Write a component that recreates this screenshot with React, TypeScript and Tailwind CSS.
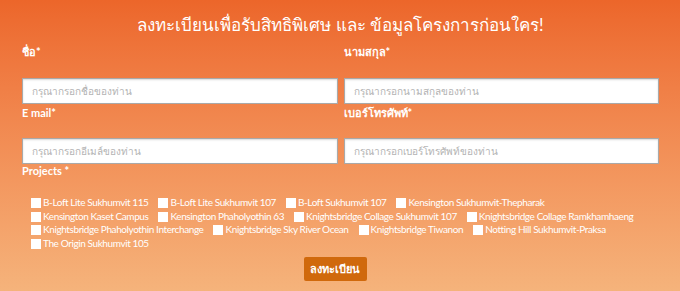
import React from 'react';

const projects = [
  'B-Loft Lite Sukhumvit 115',
  'B-Loft Lite Sukhumvit 107',
  'B-Loft Sukhumvit 107',
  'Kensington Sukhumvit-Thepharak',
  'Kensington Kaset Campus',
  'Kensington Phaholyothin 63',
  'Knightsbridge Collage Sukhumvit 107',
  'Knightsbridge Collage Ramkhamhaeng',
  'Knightsbridge Phaholyothin Interchange',
  'Knightsbridge Sky River Ocean',
  'Knightsbridge Tiwanon',
  'Notting Hill Sukhumvit-Praksa',
  'The Origin Sukhumvit 105',
];

const Field: React.FC<{ label: string; placeholder: string; gap: string }> = ({ label, placeholder, gap }) => (
  <div className="flex flex-col">
    <label className="h-[14px] text-[11px] leading-[14px] font-bold text-white">{label}</label>
    <input
      className={`${gap} h-[26px] w-full border border-[#a9a9a9] bg-white px-[9px] text-[10px] text-gray-700 shadow-[inset_0_1px_2px_rgba(0,0,0,0.15)] outline-none placeholder:text-[#b3b3b3]`}
      placeholder={placeholder}
    />
  </div>
);

export default function App() {
  return (
    <div className="h-[291px] w-[680px] overflow-hidden bg-gradient-to-b from-[#ec662a] to-[#f5b37b] pl-[22px] pr-[21px] font-['Lato','Noto_Sans',sans-serif] text-white">
      <h1 className="pt-[12px] text-center text-[17px] leading-[26px] font-normal">
        ลงทะเบียนเพื่อรับสิทธิพิเศษ และ ข้อมูลโครงการก่อนใคร!
      </h1>

      <div className="mt-[7px] grid grid-cols-2 gap-x-[6px]">
        <Field label="ชื่อ*" placeholder="กรุณากรอกชื่อของท่าน" gap="mt-[19px]" />
        <Field label="นามสกุล*" placeholder="กรุณากรอกนามสกุลของท่าน" gap="mt-[19px]" />
        <div className="mt-[2px]">
          <Field label="E mail*" placeholder="กรุณากรอกอีเมล์ของท่าน" gap="mt-[18px]" />
        </div>
        <div className="mt-[2px]">
          <Field label="เบอร์โทรศัพท์*" placeholder="กรุณากรอกเบอร์โทรศัพท์ของท่าน" gap="mt-[18px]" />
        </div>
      </div>

      <div className="h-[14px] text-[11px] leading-[14px] font-bold">Projects *</div>

      <div className="mt-[18px] flex flex-wrap pl-[9px] text-[10px] leading-[13.7px] tracking-[-0.4px]">
        {projects.map((p) => (
          <label key={p} className="mr-[10px] flex items-center">
            <span className="mr-[2px] h-[10px] w-[10px] bg-white" />
            <span>{p}</span>
          </label>
        ))}
      </div>

      <div className="mt-[6px] flex justify-center pr-[11px]">
        <button className="h-[24px] w-[63px] rounded-[2px] bg-[#d0690c] text-[11px] font-bold text-white">
          ลงทะเบียน
        </button>
      </div>
    </div>
  );
}
